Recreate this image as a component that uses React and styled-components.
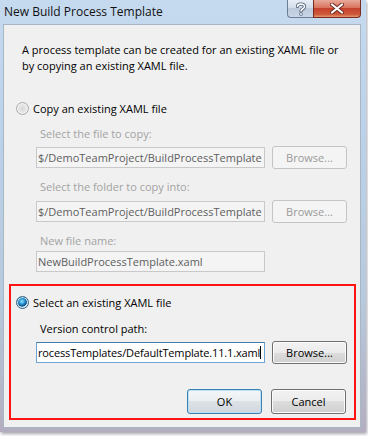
import React from "react";
import styled, { createGlobalStyle, css } from "styled-components";

const Global = createGlobalStyle`
  html, body { margin: 0; padding: 0; background: #ffffff; }
  body { width: 368px; height: 436px; overflow: hidden; }
  * { box-sizing: border-box; }
`;

const FONT = `"Open Sans", "Noto Sans", "Liberation Sans", sans-serif`;

const Window = styled.div`
  width: 366px;
  height: 432px;
  display: flex;
  flex-direction: column;
  padding: 0 5px 5px 3px;
  background:
    linear-gradient(180deg, #c6daef 0%, #bcd2ea 30%, #b7c9dc 70%, #b3aebf 100%);
  box-shadow: 1px 2px 3px rgba(60, 60, 80, 0.45);
  font-family: ${FONT};
  font-size: 11px;
  color: #000;
`;

const TitleBar = styled.div`
  height: 24px;
  display: flex;
  align-items: flex-start;
  justify-content: space-between;
  flex: none;
`;

const Title = styled.div`
  padding: 5px 0 0 1px;
  font-size: 12px;
  line-height: 14px;
  color: #111;
`;

const Caps = styled.div`
  display: flex;
`;

const CapBtn = styled.div`
  height: 18px;
  display: flex;
  align-items: center;
  justify-content: center;
  border: 1px solid #6d7f96;
  border-top: none;
  ${(p) =>
    p.$close
      ? css`
          width: 48px;
          border-color: #7a2b23;
          border-radius: 0 0 4px 0;
          background: linear-gradient(180deg, #e9a99a 0%, #d8755f 45%, #c3412d 50%, #cf5a3c 85%, #e69a6c 100%);
        `
      : css`
          width: 26px;
          border-right: none;
          border-radius: 0 0 0 4px;
          background: linear-gradient(180deg, #e8eef6 0%, #d3deea 45%, #bccadb 50%, #c8d6e6 100%);
        `}
`;

const Panel = styled.div`
  flex: 1;
  background: #f0f0f0;
  border: 1px solid #a9b6c4;
  display: flex;
  flex-direction: column;
  padding: 17px 4px 7px 0;
`;

const Desc = styled.div`
  padding-left: 18px;
  line-height: 16px;
`;

const Section = styled.div`
  display: flex;
  flex-direction: column;
  padding-left: ${(p) => p.$pl ?? 12}px;
  margin-top: ${(p) => p.$mt ?? 0}px;
`;

const RadioRow = styled.div`
  display: flex;
  align-items: center;
  height: 16px;
  gap: 4px;
`;

const Radio = styled.span`
  width: 13px;
  height: 13px;
  border-radius: 50%;
  flex: none;
  border: 1px solid ${(p) => (p.$checked ? "#2c628b" : "#a8a8a8")};
  background: ${(p) =>
    p.$checked
      ? "radial-gradient(circle at 45% 40%, #9fe4ff 0%, #2a9ad8 30%, #0a4a7e 55%, #dfe9f2 62%, #f5f8fb 100%)"
      : "radial-gradient(circle at 50% 50%, #d6d6d6 0%, #e8e8e8 55%, #f8f8f8 100%)"};
  box-shadow: inset 0 0 0 1px ${(p) => (p.$checked ? "#d8e9f6" : "#f2f2f2")};
`;

const Label = styled.div`
  height: 16px;
  line-height: 16px;
  padding-left: 24px;
  margin-top: ${(p) => p.$mt ?? 0}px;
  color: ${(p) => (p.$disabled ? "#a3a3a3" : "#000")};
`;

const FieldRow = styled.div`
  display: flex;
  align-items: center;
  gap: 7px;
  padding-left: 20px;
  height: 23px;
  margin-top: ${(p) => p.$mt ?? 0}px;
`;

const Input = styled.div`
  width: 229px;
  height: 21px;
  line-height: 19px;
  padding: 0 1px;
  white-space: nowrap;
  overflow: hidden;
  ${(p) =>
    p.$disabled
      ? css`
          border: 1px solid #c9c9c9;
          background: #f4f4f4;
          color: #5e5e5e;
        `
      : css`
          border: 1px solid #6fa3d3;
          border-top-color: #3d7bad;
          background: #ffffff;
          color: #000;
          letter-spacing: -0.15px;
        `}
`;

const Caret = styled.span`
  display: inline-block;
  width: 1px;
  height: 13px;
  background: #000;
  vertical-align: -2px;
`;

const Button = styled.div`
  width: 75px;
  height: ${(p) => p.$h ?? 23}px;
  display: flex;
  align-items: center;
  justify-content: center;
  border-radius: 3px;
  flex: none;
  ${(p) =>
    p.$disabled
      ? css`
          border: 1px solid #c2c5c8;
          background: #f4f4f4;
          color: #9a9a9a;
        `
      : p.$default
      ? css`
          border: 1px solid #3c7fb1;
          background: linear-gradient(180deg, #f4f6f8 0%, #ebeef1 50%, #dde2e7 50%, #d0d6dc 100%);
          box-shadow: inset 0 0 0 1px #b8e0f7;
          color: #000;
        `
      : css`
          border: 1px solid #707070;
          background: linear-gradient(180deg, #f2f2f2 0%, #ebebeb 50%, #dddddd 50%, #cfcfcf 100%);
          box-shadow: inset 0 0 0 1px #fbfbfb;
          color: #000;
        `}
`;

const Highlight = styled.div`
  margin: 11px 0 0 5px;
  border: 2px solid #ff1414;
  padding: 8px 0 5px 5px;
  height: 136px;
  display: flex;
  flex-direction: column;
`;

const ButtonRow = styled.div`
  display: flex;
  gap: 9px;
  justify-content: flex-end;
  margin-top: 25px;
  padding-right: 8px;
`;

const HelpIcon = () => (
  <svg width="12" height="14" viewBox="0 0 12 14">
    <path
      d="M2.5 4.5 C2.5 1.5 9.5 1.2 9.5 4.5 C9.5 7 6 7 6 9"
      fill="none"
      stroke="#4a5a70"
      strokeWidth="3.2"
      strokeLinecap="round"
    />
    <path
      d="M2.5 4.5 C2.5 1.5 9.5 1.2 9.5 4.5 C9.5 7 6 7 6 9"
      fill="none"
      stroke="#ffffff"
      strokeWidth="1.6"
      strokeLinecap="round"
    />
    <circle cx="6" cy="12" r="1.7" fill="#4a5a70" />
    <circle cx="6" cy="12" r="1" fill="#ffffff" />
  </svg>
);

const CloseIcon = () => (
  <svg width="14" height="11" viewBox="0 0 14 11">
    <path d="M2 1.5 L12 9.5 M12 1.5 L2 9.5" stroke="#6b2a22" strokeWidth="4" strokeLinecap="round" />
    <path d="M2 1.5 L12 9.5 M12 1.5 L2 9.5" stroke="#ffffff" strokeWidth="2.2" strokeLinecap="round" />
  </svg>
);

export default function App() {
  return (
    <>
      <Global />
      <Window>
        <TitleBar>
          <Title>New Build Process Template</Title>
          <Caps>
            <CapBtn>
              <HelpIcon />
            </CapBtn>
            <CapBtn $close>
              <CloseIcon />
            </CapBtn>
          </Caps>
        </TitleBar>
        <Panel>
          <Desc>
            A process template can be created for an existing XAML file or
            <br />
            by copying an existing XAML file.
          </Desc>
          <Section $mt={26}>
            <RadioRow>
              <Radio />
              <span>Copy an existing XAML file</span>
            </RadioRow>
            <Label $disabled $mt={10}>Select the file to copy:</Label>
            <FieldRow $mt={4}>
              <Input $disabled>$/DemoTeamProject/BuildProcessTemplate</Input>
              <Button $disabled>Browse...</Button>
            </FieldRow>
            <Label $disabled $mt={10}>Select the folder to copy into:</Label>
            <FieldRow $mt={5}>
              <Input $disabled>$/DemoTeamProject/BuildProcessTemplate</Input>
              <Button $disabled>Browse...</Button>
            </FieldRow>
            <Label $disabled $mt={10}>New file name:</Label>
            <FieldRow $mt={1}>
              <Input $disabled>NewBuildProcessTemplate.xaml</Input>
            </FieldRow>
          </Section>
          <Highlight>
            <Section $pl={0}>
              <RadioRow>
                <Radio $checked />
                <span>Select an existing XAML file</span>
              </RadioRow>
              <Label $mt={11}>Version control path:</Label>
              <FieldRow $mt={4}>
                <Input>
                  rocessTemplates/DefaultTemplate.11.1.xaml
                  <Caret />
                </Input>
                <Button>Browse...</Button>
              </FieldRow>
            </Section>
            <ButtonRow>
              <Button $default $h={25}>OK</Button>
              <Button $h={25}>Cancel</Button>
            </ButtonRow>
          </Highlight>
        </Panel>
      </Window>
    </>
  );
}
